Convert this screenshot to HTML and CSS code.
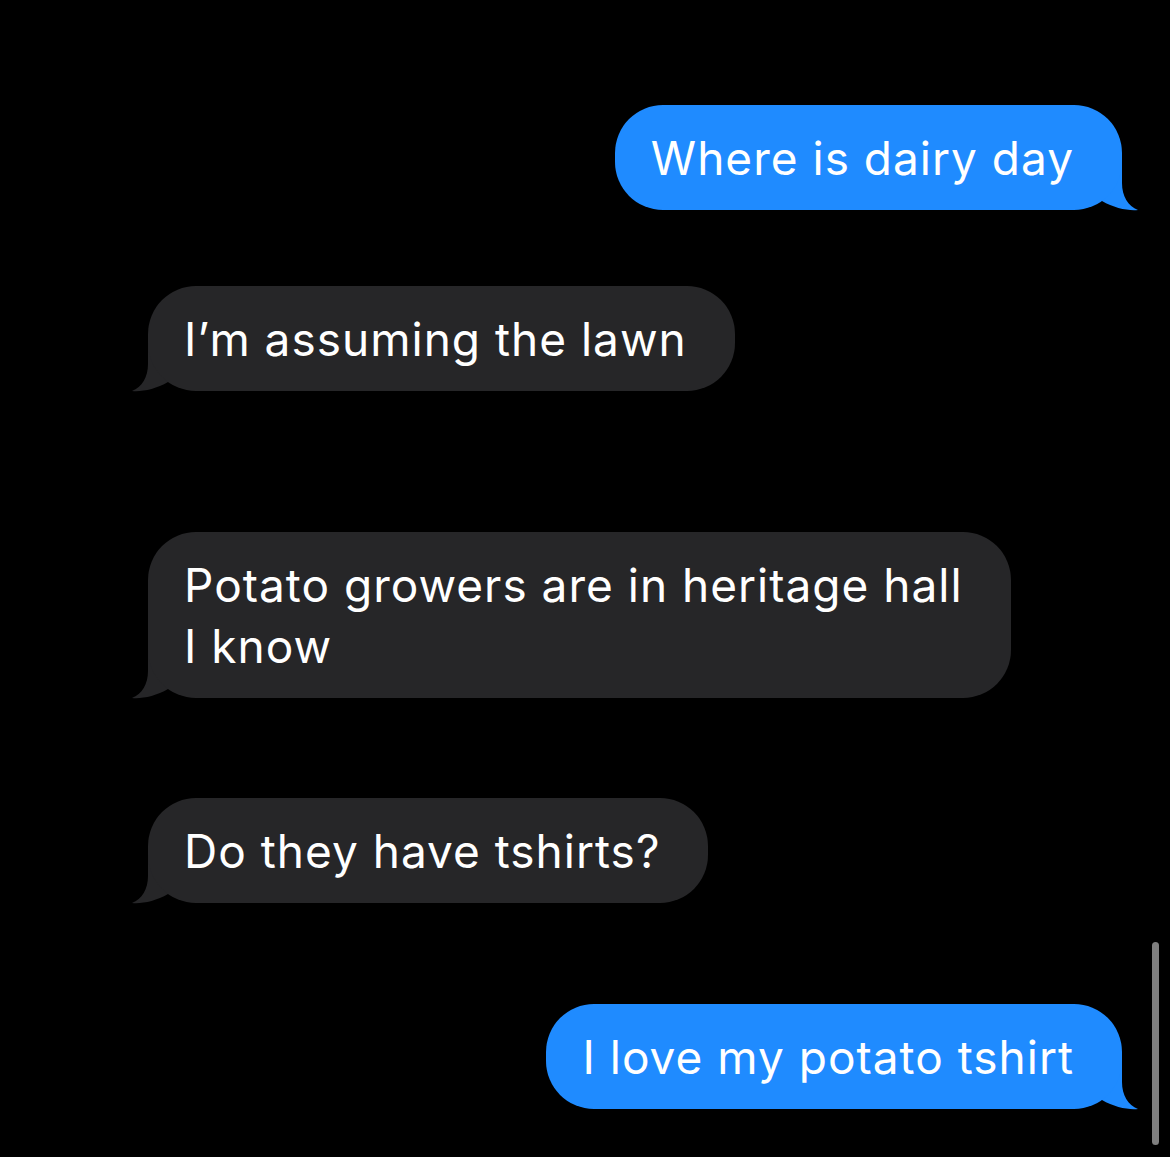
FILE: index.html
```html
<!DOCTYPE html>
<html lang="en">
<head>
<meta charset="utf-8">
<title>Messages</title>
<link rel="stylesheet" href="styles.css">
</head>
<body>
<main class="thread">
  <div class="msg sent first">
    <p class="bubble blue">Where is dairy day</p>
    <svg class="tail tail-right" viewBox="0 0 50 52" aria-hidden="true"><path d="M20 0 L34 0 L34 23 C34 36 40 46 50 50 C40 51 26 48 14 41 L0 25 Z"/></svg>
  </div>

  <div class="msg recv gap-a">
    <p class="bubble gray">I’m assuming the lawn</p>
    <svg class="tail tail-left" viewBox="0 0 50 52" aria-hidden="true"><path d="M20 0 L34 0 L34 23 C34 36 40 46 50 50 C40 51 26 48 14 41 L0 25 Z"/></svg>
  </div>

  <div class="msg recv gap-b">
    <p class="bubble gray">Potato growers are in heritage hall<br>I know</p>
    <svg class="tail tail-left" viewBox="0 0 50 52" aria-hidden="true"><path d="M20 0 L34 0 L34 23 C34 36 40 46 50 50 C40 51 26 48 14 41 L0 25 Z"/></svg>
  </div>

  <div class="msg recv gap-c">
    <p class="bubble gray">Do they have tshirts?</p>
    <svg class="tail tail-left" viewBox="0 0 50 52" aria-hidden="true"><path d="M20 0 L34 0 L34 23 C34 36 40 46 50 50 C40 51 26 48 14 41 L0 25 Z"/></svg>
  </div>

  <div class="msg sent gap-d">
    <p class="bubble blue">I love my potato tshirt</p>
    <svg class="tail tail-right" viewBox="0 0 50 52" aria-hidden="true"><path d="M20 0 L34 0 L34 23 C34 36 40 46 50 50 C40 51 26 48 14 41 L0 25 Z"/></svg>
  </div>
</main>
<div class="scrollbar"></div>
</body>
</html>
```

FILE: styles.css
```css
html, body {
  margin: 0;
  padding: 0;
  background: #000;
}
body {
  width: 1170px;
  height: 1157px;
  overflow: hidden;
  position: relative;
  font-family: Inter, "Noto Sans", "Liberation Sans", sans-serif;
  -webkit-font-smoothing: antialiased;
}
.thread {
  display: flex;
  flex-direction: column;
  padding: 105px 48px 0 148px;
}
.msg {
  position: relative;
  display: flex;
}
.msg.sent { align-self: flex-end; }
.msg.recv { align-self: flex-start; }
.gap-a { margin-top: 76px; }
.gap-b { margin-top: 141px; }
.gap-c { margin-top: 100px; }
.gap-d { margin-top: 101px; }

.bubble {
  position: relative;
  z-index: 1;
  margin: 0;
  padding: 23px 48px 21px 36px;
  border-radius: 48px;
  font-size: 46px;
  line-height: 61px;
  color: #fff;
  white-space: nowrap;
  letter-spacing: 1px;
}
.blue { background: #1f8bff; }
.gray { background: #262628; }

.tail {
  position: absolute;
  bottom: -2px;
  width: 50px;
  height: 52px;
  z-index: 0;
}
.tail-right { right: -16px; }
.tail-left { left: -16px; transform: scaleX(-1); }
.sent .tail path { fill: #1f8bff; }
.recv .tail path { fill: #262628; }

.scrollbar {
  position: absolute;
  left: 1152px;
  top: 942px;
  width: 7px;
  height: 203px;
  border-radius: 4px;
  background: #7f7f7f;
}
```
